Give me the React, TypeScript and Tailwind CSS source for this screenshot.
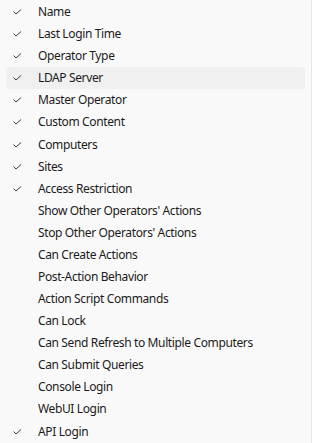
const items: [string, boolean][] = [
  ["Name", true],
  ["Last Login Time", true],
  ["Operator Type", true],
  ["LDAP Server", true],
  ["Master Operator", true],
  ["Custom Content", true],
  ["Computers", true],
  ["Sites", true],
  ["Access Restriction", true],
  ["Show Other Operators' Actions", false],
  ["Stop Other Operators' Actions", false],
  ["Can Create Actions", false],
  ["Post-Action Behavior", false],
  ["Action Script Commands", false],
  ["Can Lock", false],
  ["Can Send Refresh to Multiple Computers", false],
  ["Can Submit Queries", false],
  ["Console Login", false],
  ["WebUI Login", false],
  ["API Login", true],
];

function Check() {
  return (
    <svg width="9" height="6" viewBox="0 0 9 6" fill="none">
      <path d="M0.5 2.6 L3 5 L8.2 0.4" stroke="#3a3a3a" strokeWidth="1" />
    </svg>
  );
}

export default function App() {
  return (
    <div className="w-[312px] h-[443px] pt-[1px] bg-[#f9f9f9] border-r border-[#e5e5e5] overflow-hidden font-['Segoe_UI','Noto_Sans',sans-serif] text-[12px] tracking-[-0.37px] text-[#1b1b1b]">
      {items.map(([label, checked]) => (
        <div
          key={label}
          className={
            "mx-[6px] h-[22.08px] flex items-center rounded-[4px] " +
            (label === "LDAP Server" ? "bg-[#f0f0f0]" : "")
          }
        >
          <div className="w-[32px] pl-[7px] flex items-center">{checked && <Check />}</div>
          <span className="leading-none">{label}</span>
        </div>
      ))}
    </div>
  );
}
